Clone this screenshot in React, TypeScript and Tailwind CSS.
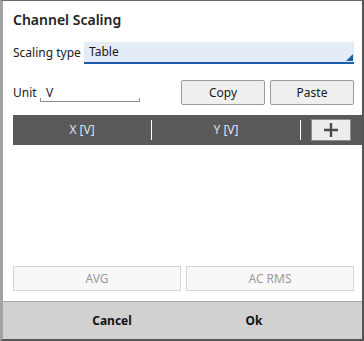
import React from 'react';

const font = { fontFamily: '"Noto Sans", "Open Sans", sans-serif' };

const ChannelScaling: React.FC = () => {
  return (
    <div
      className="w-[364px] h-[341px] flex flex-col bg-white border-l-[3px] border-l-[#a3a3a3] border-r-2 border-r-[#555555] border-t border-t-[#6b6b6b] border-b-2 border-b-[#555555] text-[12px] text-[#1a1a1a] overflow-hidden"
      style={font}
    >
      <div className="flex-1 flex flex-col pl-[10px] pr-[8px]">
        <h1 className="mt-[9px] h-[20px] leading-[20px] text-[14px] font-semibold text-[#222]">
          Channel Scaling
        </h1>

        <div className="mt-[12px] flex items-center h-[22px]">
          <span className="w-[71px] shrink-0">Scaling type</span>
          <div className="relative flex-1 h-[22px] bg-[#e4edf7] border-b-2 border-b-[#1d5ea8] pl-[5px] leading-[20px]">
            Table
            <div className="absolute right-[1px] bottom-[1px] w-0 h-0 border-l-[7px] border-l-transparent border-b-[7px] border-b-[#1d5ea8]" />
          </div>
        </div>

        <div className="mt-[16px] flex items-center h-[25px]">
          <span className="w-[27px] shrink-0">Unit</span>
          <div className="w-[100px] h-[18px] border-b border-x border-[#8a8a8a] relative">
            <div className="absolute left-0 right-0 top-0 h-[14px] bg-white -mx-px" />
            <span className="relative pl-[5px] leading-[16px]">V</span>
          </div>
          <div className="flex-1" />
          <button className="w-[84px] h-[25px] bg-[#efefef] border border-[#9a9a9a] rounded-[2px] text-[12px]">
            Copy
          </button>
          <button className="ml-[5px] w-[84px] h-[25px] bg-[#efefef] border border-[#9a9a9a] rounded-[2px] text-[12px]">
            Paste
          </button>
        </div>

        <div className="mt-[10px] -mr-[8px] h-[30px] bg-[#595959] flex items-center text-[#d6e6f5]">
          <div className="w-[138px] text-center">X [V]</div>
          <div className="w-px h-[20px] bg-white" />
          <div className="w-[148px] text-center">Y [V]</div>
          <div className="w-px h-[20px] bg-white" />
          <button className="ml-[10px] w-[40px] h-[22px] bg-[#ededed] border border-[#8c8c8c] flex items-center justify-center">
            <svg width="16" height="16" viewBox="0 0 16 16">
              <path d="M8 1v14M1 8h14" stroke="#4a4a4a" strokeWidth="2.4" />
            </svg>
          </button>
        </div>

        <div className="flex-1" />

        <div className="mb-[10px] flex gap-[5px]">
          <button className="w-[168px] h-[25px] bg-[#f8f8f8] border border-[#d6d6d6] text-[#9a9a9a] text-[12px]">
            AVG
          </button>
          <button className="flex-1 h-[25px] bg-[#f8f8f8] border border-[#d6d6d6] text-[#9a9a9a] text-[12px]">
            AC RMS
          </button>
        </div>
      </div>

      <div className="h-[38px] shrink-0 bg-[#d1d1d1] border-t border-t-[#a8a8a8] flex items-center font-bold text-[12px] text-[#111]">
        <div className="w-[218px] text-center">Cancel</div>
        <div className="w-[66px] text-center">Ok</div>
      </div>
    </div>
  );
};

export default function App() {
  return <ChannelScaling />;
}
